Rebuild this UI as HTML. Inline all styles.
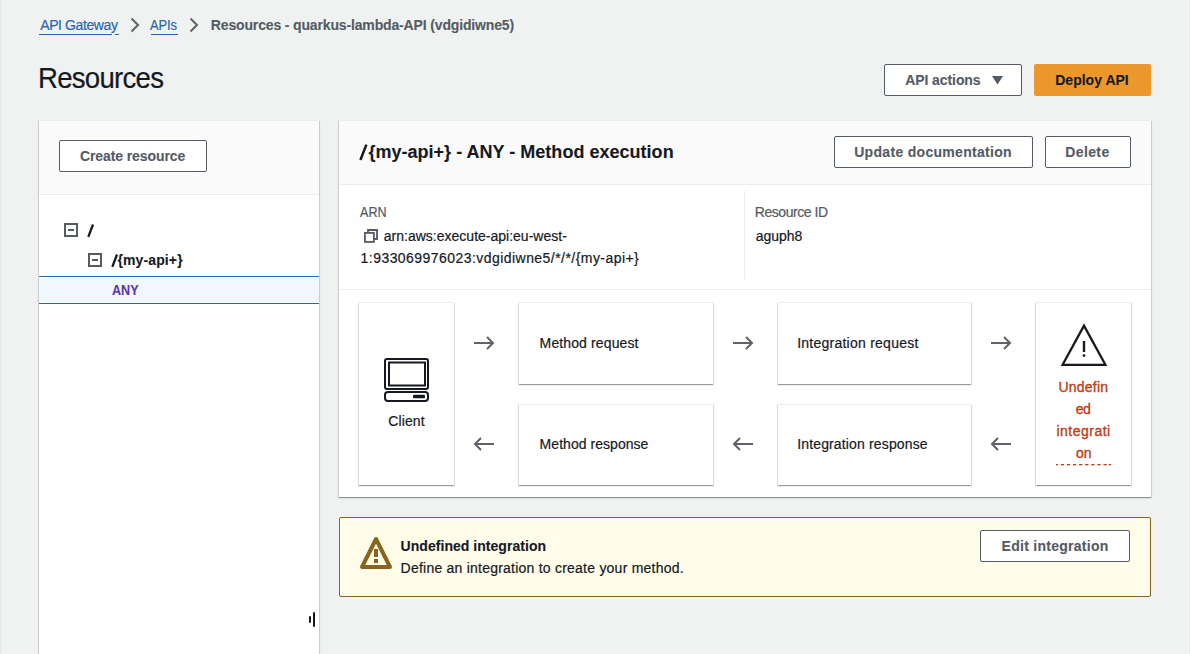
<!DOCTYPE html>
<html><head><meta charset="utf-8">
<style>
*{box-sizing:border-box;margin:0;padding:0}
html,body{width:1190px;height:654px;overflow:hidden}
body{background:#f0f2f1;font-family:"Liberation Sans",sans-serif;color:#16191f;position:relative;font-size:14px}
.abs{position:absolute}
.t{position:absolute;white-space:nowrap;line-height:1;-webkit-text-stroke:0.2px currentColor}
.b{-webkit-text-stroke:0.1px currentColor}
.b{font-weight:bold}
.g{color:#545b64}
.link{color:#2a66b0}
.ul{position:absolute;height:1px;background:#2a66b0}
.btn{position:absolute;background:#fff;border:1px solid #545b64;border-radius:2px}
.panel{position:absolute;background:#fff;box-shadow:0 1px 1px 0 rgba(10,16,24,.26),1px 1px 1px 0 rgba(10,16,24,.115),-1px 1px 1px 0 rgba(10,16,24,.115)}
.card{position:absolute;background:#fff;border-top:1px solid #eaeded;box-shadow:0 1px 1px 0 rgba(10,16,24,.26),1px 1px 1px 0 rgba(10,16,24,.115),-1px 1px 1px 0 rgba(10,16,24,.115)}
</style></head><body>
<div class="abs" style="left:0;top:0;width:1px;height:654px;background:#e6e8e8"></div>
<div class="abs" style="left:1189px;top:0;width:1px;height:654px;background:#e8eaea"></div>

<!-- breadcrumb -->
<span id="bc1" class="t link" style="left:40.2px;top:18px;letter-spacing:-0.4px">API Gateway</span>
<div class="ul" style="left:39px;top:34px;width:73px"></div><div class="ul" style="left:114.5px;top:34px;width:4.5px"></div>
<svg class="abs" style="left:129px;top:17px" width="12" height="16" viewBox="0 0 12 16"><path d="M2.5 1.5L9 8L2.5 14.5" fill="none" stroke="#5f6268" stroke-width="2"/></svg>
<span id="bc2" class="t link" style="left:150.3px;top:18px;transform:scaleX(0.92);transform-origin:0 0;letter-spacing:-0.1px">APIs</span>
<div class="ul" style="left:151px;top:34px;width:27px"></div>
<svg class="abs" style="left:188px;top:17px" width="12" height="16" viewBox="0 0 12 16"><path d="M2.5 1.5L9 8L2.5 14.5" fill="none" stroke="#5f6268" stroke-width="2"/></svg>
<span id="bc3" class="t g b" style="left:210.8px;top:18px;letter-spacing:-0.149px">Resources - quarkus-lambda-API (vdgidiwne5)</span>

<!-- heading -->
<span id="h1" class="t" style="left:38.4px;top:63px;font-size:30px;transform:scaleX(0.92);transform-origin:0 0;letter-spacing:-0.814px">Resources</span>
<div class="btn" style="left:884px;top:64px;width:138px;height:32px"></div>
<span id="apiact" class="t g b" style="left:905.2px;top:73px;letter-spacing:-0.08px">API actions</span>
<svg class="abs" style="left:992px;top:76px" width="11" height="9" viewBox="0 0 11 9"><path d="M0 0H11L5.5 8.5Z" fill="#545b64"/></svg>
<div class="abs" style="left:1034px;top:64px;width:117px;height:32px;background:#ec972c;border-radius:2px"></div>
<span id="deploy" class="t b" style="left:1055.2px;top:73px;letter-spacing:0.021px">Deploy API</span>

<!-- left panel -->
<div class="panel" style="left:39px;top:120px;width:280px;height:561px;border-top:1px solid #eaeded">
  <div class="abs" style="left:0;top:0;width:280px;height:74px;background:#fafafa;border-bottom:1px solid #eaeded"></div>
</div>
<div class="btn" style="left:59px;top:140px;width:148px;height:32px"></div>
<span id="create" class="t g b" style="left:80.0px;top:149px;letter-spacing:-0.1px">Create resource</span>

<!-- tree -->
<svg class="abs" style="left:64px;top:223px" width="14" height="14" viewBox="0 0 14 14"><rect x="1" y="1" width="12" height="12" fill="none" stroke="#545b64" stroke-width="2"/><line x1="4" y1="7" x2="10" y2="7" stroke="#545b64" stroke-width="2"/></svg>
<svg class="abs" style="left:86px;top:223px" width="10" height="16" viewBox="0 0 10 16"><path d="M7 1.5L2.3 13.8" stroke="#16191f" stroke-width="2.3"/></svg>
<svg class="abs" style="left:88px;top:253px" width="14" height="14" viewBox="0 0 14 14"><rect x="1" y="1" width="12" height="12" fill="none" stroke="#545b64" stroke-width="2"/><line x1="4" y1="7" x2="10" y2="7" stroke="#545b64" stroke-width="2"/></svg>
<svg class="abs" style="left:110px;top:253.3px" width="10" height="16" viewBox="0 0 10 16"><path d="M7 1.5L2.3 13.8" stroke="#16191f" stroke-width="2.3"/></svg><span id="res" class="t b" style="left:117.4px;top:253px;letter-spacing:0.124px">{my-api+}</span>
<div class="abs" style="left:39px;top:276px;width:280px;height:28px;background:#fff;border-top:1px solid #2a66b0;border-bottom:1px solid #2a66b0;padding:1px 0"><div style="height:24px;background:#f0f7fe"></div></div>
<span id="any" class="t b" style="left:111.6px;top:283px;color:#5a38ae;letter-spacing:0.0px;transform:scaleX(0.9);transform-origin:0 0">ANY</span>

<!-- resize handle -->
<div class="abs" style="left:309px;top:616px;width:2px;height:7px;background:#16191f;border-radius:1px"></div>
<div class="abs" style="left:313px;top:612px;width:2px;height:15px;background:#16191f;border-radius:1px"></div>

<!-- right panel -->
<div class="panel" style="left:339px;top:120px;width:812px;height:377px;border-top:1px solid #eaeded">
  <div class="abs" style="left:0;top:0;width:812px;height:64px;background:#fafafa;border-bottom:1px solid #eaeded"></div>
</div>
<svg class="abs" style="left:358px;top:142px" width="12" height="20" viewBox="0 0 12 20"><path d="M8.4 2.6L2.4 18" stroke="#16191f" stroke-width="2.5"/></svg><span id="title" class="t b" style="left:368.4px;top:143px;font-size:18px;letter-spacing:0.021px">{my-api+} - ANY - Method execution</span>
<div class="btn" style="left:834px;top:136px;width:199px;height:32px"></div>
<span id="upd" class="t g b" style="left:854.2px;top:145px;letter-spacing:0.306px">Update documentation</span>
<div class="btn" style="left:1045px;top:136px;width:86px;height:32px"></div>
<span id="del" class="t g b" style="left:1065.2px;top:145px;letter-spacing:0.4px">Delete</span>

<!-- ARN -->
<span id="arn" class="t g" style="left:359.9px;top:205px;transform:scaleX(0.9);transform-origin:0 0;letter-spacing:0px">ARN</span>
<svg class="abs" style="left:364px;top:229px" width="14" height="14" viewBox="0 0 14 14"><path d="M4 4V1H13V10H10" fill="none" stroke="#545b64" stroke-width="1.8"/><rect x="0.9" y="3.9" width="9" height="9" fill="none" stroke="#545b64" stroke-width="1.8"/></svg>
<span id="arn1" class="t" style="left:383.8px;top:229px;letter-spacing:0.005px">arn:aws:execute-api:eu-west-</span>
<span id="arn2" class="t" style="left:360.6px;top:251px;letter-spacing:0.448px">1:933069976023:vdgidiwne5/*/*/{my-api+}</span>
<div class="abs" style="left:744px;top:191px;width:1px;height:88px;background:#eaeded"></div>
<span id="rid" class="t g" style="left:754.8px;top:205px;letter-spacing:-0.46px">Resource ID</span>
<span id="ridv" class="t" style="left:755.8px;top:229px;letter-spacing:-0.04px">aguph8</span>
<div class="abs" style="left:339px;top:289px;width:812px;height:1px;background:#eaeded"></div>

<!-- diagram -->
<div class="card" style="left:359px;top:302px;width:95px;height:183px"></div>
<div class="card" style="left:519px;top:302px;width:194px;height:82px"></div>
<div class="card" style="left:519px;top:404px;width:194px;height:81px"></div>
<div class="card" style="left:778px;top:302px;width:193px;height:82px"></div>
<div class="card" style="left:778px;top:404px;width:193px;height:81px"></div>
<div class="card" style="left:1036px;top:302px;width:95px;height:183px"></div>

<svg class="abs" style="left:383px;top:357px" width="48" height="46" viewBox="0 0 48 46"><rect x="2" y="2" width="43" height="30" rx="2" fill="none" stroke="#16191f" stroke-width="2"/><rect x="6" y="5.5" width="36" height="23" fill="none" stroke="#16191f" stroke-width="2"/><rect x="2" y="35" width="43" height="9" rx="3" fill="none" stroke="#16191f" stroke-width="2"/><rect x="30" y="37.8" width="12" height="3.4" rx="1" fill="#16191f"/></svg>
<span id="client" class="t" style="left:388.2px;top:414px;letter-spacing:0.12px">Client</span>

<span id="mreq" class="t" style="left:539.6px;top:336px;letter-spacing:0.122px">Method request</span>
<span id="mres" class="t" style="left:539.6px;top:437px;letter-spacing:0.042px">Method response</span>
<span id="ireq" class="t" style="left:797.2px;top:336px;letter-spacing:0.245px">Integration request</span>
<span id="ires" class="t" style="left:797.2px;top:437px;letter-spacing:0.147px">Integration response</span>

<svg class="abs" style="left:472px;top:335px" width="24" height="16" viewBox="0 0 24 16"><path d="M2 8H21M15 2L21 8L15 14" fill="none" stroke="#5f6268" stroke-width="2"/></svg>
<svg class="abs" style="left:731px;top:335px" width="24" height="16" viewBox="0 0 24 16"><path d="M2 8H21M15 2L21 8L15 14" fill="none" stroke="#5f6268" stroke-width="2"/></svg>
<svg class="abs" style="left:989px;top:335px" width="24" height="16" viewBox="0 0 24 16"><path d="M2 8H21M15 2L21 8L15 14" fill="none" stroke="#5f6268" stroke-width="2"/></svg>
<svg class="abs" style="left:472px;top:436px" width="24" height="16" viewBox="0 0 24 16"><path d="M22 8H3M9 2L3 8L9 14" fill="none" stroke="#5f6268" stroke-width="2"/></svg>
<svg class="abs" style="left:731px;top:436px" width="24" height="16" viewBox="0 0 24 16"><path d="M22 8H3M9 2L3 8L9 14" fill="none" stroke="#5f6268" stroke-width="2"/></svg>
<svg class="abs" style="left:989px;top:436px" width="24" height="16" viewBox="0 0 24 16"><path d="M22 8H3M9 2L3 8L9 14" fill="none" stroke="#5f6268" stroke-width="2"/></svg>

<svg class="abs" style="left:1058px;top:320px" width="52" height="48" viewBox="0 0 52 48"><path d="M26 5.6L4.6 44.8H47.4Z" fill="none" stroke="#16191f" stroke-width="2.3" stroke-linejoin="miter" stroke-miterlimit="3"/><path d="M26 21V32" stroke="#16191f" stroke-width="2.4"/><circle cx="26" cy="35.6" r="1.4" fill="#16191f"/></svg>
<span id="u1" class="t" style="left:1058.4px;top:380px;color:#bf3c16;-webkit-text-stroke:0.35px #bf3c16;letter-spacing:0.251px">Undefin</span>
<span id="u2" class="t" style="left:1075.8px;top:402px;color:#bf3c16;-webkit-text-stroke:0.35px #bf3c16;letter-spacing:-0.6px">ed</span>
<span id="u3" class="t" style="left:1056.4px;top:424px;color:#bf3c16;-webkit-text-stroke:0.35px #bf3c16;letter-spacing:0.5px">integrati</span>
<span id="u4" class="t" style="left:1076.0px;top:446px;color:#bf3c16;-webkit-text-stroke:0.35px #bf3c16;letter-spacing:0.0px">on</span>
<svg class="abs" style="left:1050px;top:463px" width="66" height="4"><rect x="6.0" y="1" width="2" height="1.3" fill="#bf3c16"/><rect x="10.8" y="1" width="3.2" height="1.3" fill="#bf3c16"/><rect x="16.9" y="1" width="3.2" height="1.3" fill="#bf3c16"/><rect x="23.0" y="1" width="3.2" height="1.3" fill="#bf3c16"/><rect x="29.1" y="1" width="3.2" height="1.3" fill="#bf3c16"/><rect x="35.2" y="1" width="3.2" height="1.3" fill="#bf3c16"/><rect x="41.3" y="1" width="3.2" height="1.3" fill="#bf3c16"/><rect x="47.4" y="1" width="3.2" height="1.3" fill="#bf3c16"/><rect x="53.5" y="1" width="3.2" height="1.3" fill="#bf3c16"/><rect x="58.8" y="1" width="2.2" height="1.3" fill="#bf3c16"/></svg>

<!-- alert -->
<div class="abs" style="left:339px;top:517px;width:812px;height:80px;background:#fffce9;border:1px solid #88641e;border-radius:2px"></div>
<svg class="abs" style="left:358px;top:535px" width="36" height="36" viewBox="0 0 36 36"><path d="M18 4L4 32H32Z" fill="none" stroke="#88641e" stroke-width="4" stroke-linejoin="round"/><rect x="16" y="14" width="4" height="8" fill="#88641e"/><rect x="16" y="24" width="4" height="4" fill="#88641e"/></svg>
<span id="undef" class="t b" style="left:400.6px;top:539px;letter-spacing:0.04px">Undefined integration</span>
<span id="define" class="t" style="left:400.6px;top:561px;letter-spacing:0.229px">Define an integration to create your method.</span>
<div class="btn" style="left:980px;top:530px;width:150px;height:32px"></div>
<span id="editint" class="t g b" style="left:1001.6px;top:539px;letter-spacing:0.266px">Edit integration</span>
</body></html>
